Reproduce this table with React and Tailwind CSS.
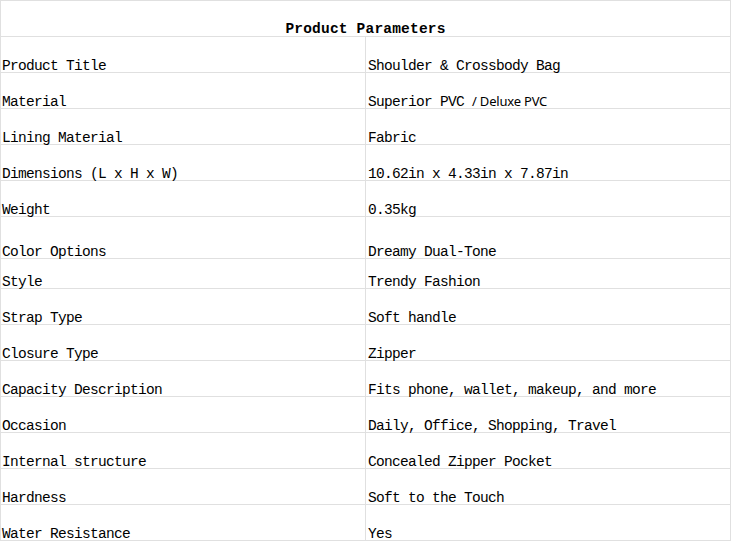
import React from 'react';

const rows = [
  { label: 'Product Title', value: 'Shoulder & Crossbody Bag' },
  { label: 'Material', value: 'Superior PVC ', extra: '/ Deluxe PVC' },
  { label: 'Lining Material', value: 'Fabric' },
  { label: 'Dimensions (L x H x W)', value: '10.62in x 4.33in x 7.87in' },
  { label: 'Weight', value: '0.35kg' },
  { label: 'Color Options', value: 'Dreamy Dual-Tone', h: 'h-[42px]' },
  { label: 'Style', value: 'Trendy Fashion', h: 'h-[30px]' },
  { label: 'Strap Type', value: 'Soft handle' },
  { label: 'Closure Type', value: 'Zipper' },
  { label: 'Capacity Description', value: 'Fits phone, wallet, makeup, and more' },
  { label: 'Occasion', value: 'Daily, Office, Shopping, Travel' },
  { label: 'Internal structure', value: 'Concealed Zipper Pocket' },
  { label: 'Hardness', value: 'Soft to the Touch' },
  { label: 'Water Resistance', value: 'Yes' },
];

const mono = "font-['Liberation_Mono','DejaVu_Sans_Mono',monospace]";

// Ligne du tableau : le texte est calé en bas de la cellule
const ParamRow = ({ label, value, extra, h }) => (
  <div className={`grid grid-cols-[365px_1fr] border-b border-[#e0e0e0] ${h || 'h-[36px]'}`}>
    <div className="flex items-end border-r border-[#e0e0e0] pl-[1px]">
      <span className="leading-[12px]">{label}</span>
    </div>
    <div className="flex items-end pl-[2px]">
      <span className="leading-[12px] whitespace-pre">
        {value}
        {extra && (
          <span className="font-['Noto_Sans','Liberation_Sans',sans-serif] text-[13px] tracking-[-0.2px]">{extra}</span>
        )}
      </span>
    </div>
  </div>
);

export default function App() {
  return (
    <div className="w-[731px] h-[541px] bg-white overflow-hidden">
      <div className={`w-[731px] border-l border-r border-t border-[#e0e0e0] text-black text-[14.5px] tracking-[-0.7px] ${mono}`}>
        <div className="h-[36px] border-b border-[#e0e0e0] flex items-end justify-center pb-[1px]">
          <span className="font-bold leading-[12px] tracking-[0.2px]">Product Parameters</span>
        </div>
        {rows.map((row) => (
          <ParamRow key={row.label} {...row} />
        ))}
      </div>
    </div>
  );
}
